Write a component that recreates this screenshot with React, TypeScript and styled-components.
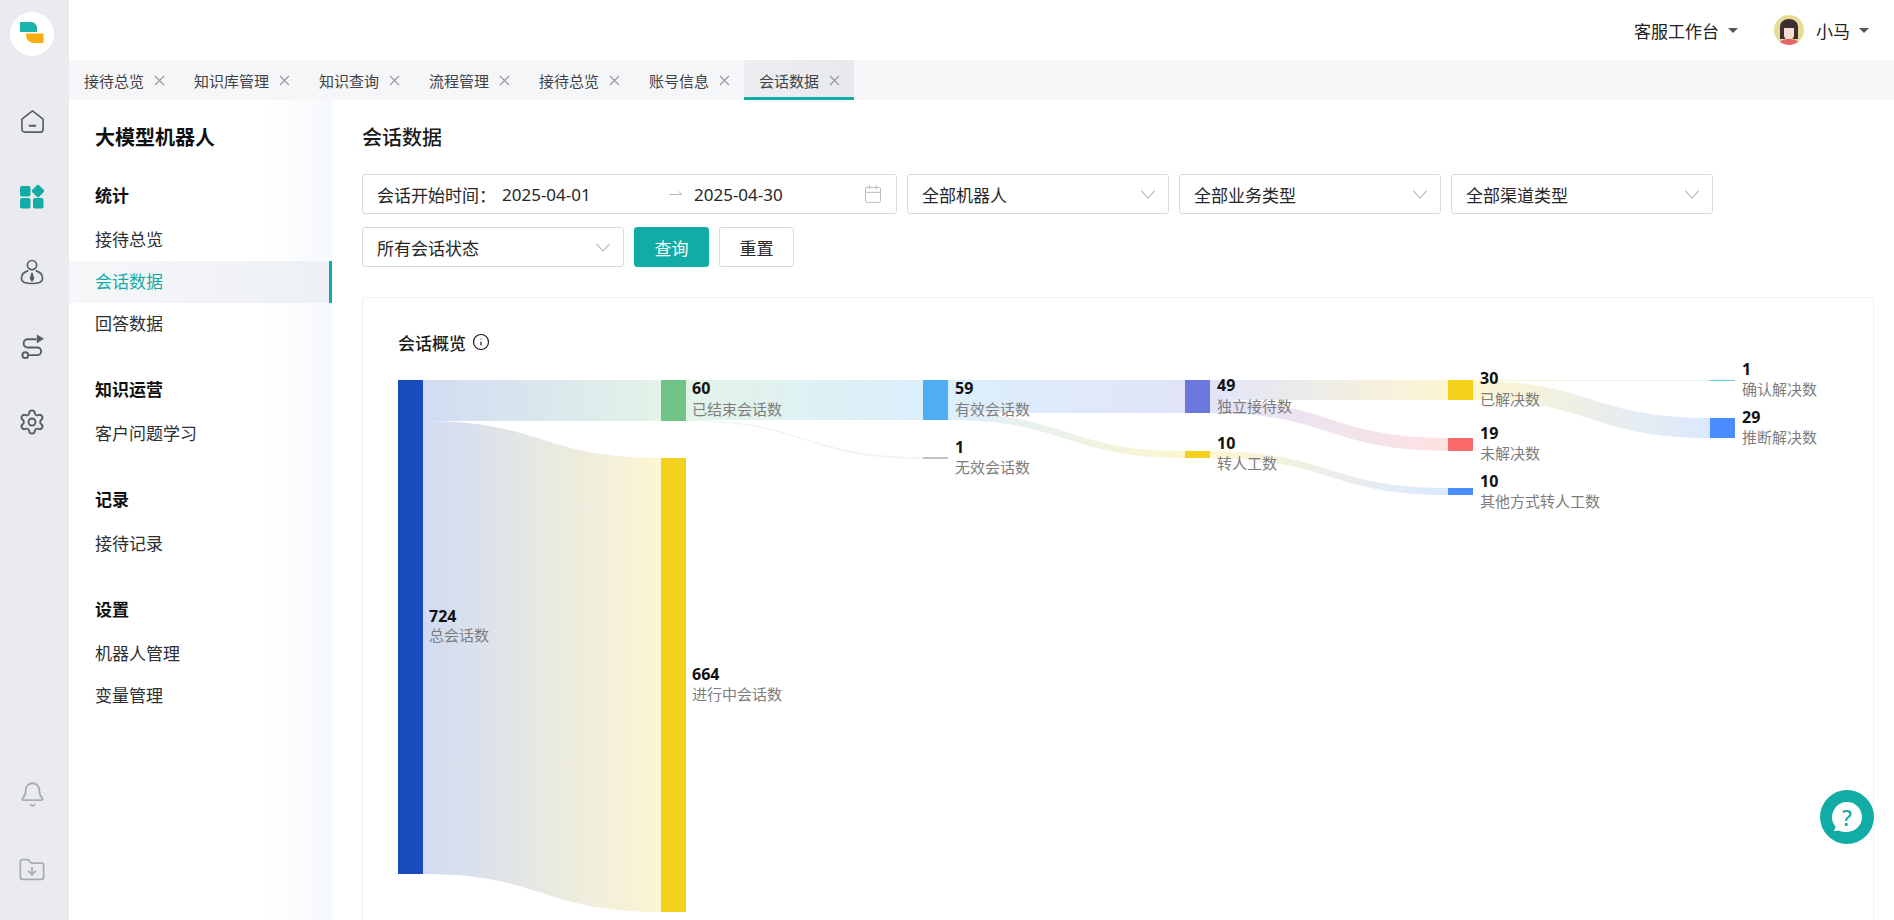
import * as React from 'react';
import styled, { createGlobalStyle } from 'styled-components';
import { Bell, Calendar, FolderDown, Info, Settings, X } from 'lucide-react';

const TEAL = '#12aca6';
const FONT = '"Noto Sans", "Noto Sans CJK SC", sans-serif';

const GlobalStyle = createGlobalStyle`
  html, body {
    margin: 0;
    height: 100%;
    overflow: hidden;
    background: #fff;
    font-family: ${FONT};
  }
  * { box-sizing: border-box; }
`;

const Page = styled.div`
  display: flex;
  width: 1894px;
  height: 920px;
  overflow: hidden;
  color: #222;
`;

const Rail = styled.nav`
  flex: 0 0 69px;
  display: flex;
  flex-direction: column;
  align-items: center;
  padding: 12px 5px 13px 0;
  background: #e9ebef;
`;

const LogoCircle = styled.div`
  display: flex;
  align-items: center;
  justify-content: center;
  width: 44px;
  height: 44px;
  margin-bottom: 28px;
  border-radius: 50%;
  background: #fff;
`;

const RailItem = styled.div<{ $pushDown?: boolean }>`
  display: flex;
  align-items: center;
  justify-content: center;
  width: 100%;
  height: 75px;
  margin-top: ${(p) => (p.$pushDown ? 'auto' : '0')};
  color: #585c63;
`;

const MutedRailItem = styled(RailItem)`
  color: #a8acb2;
`;

const Column = styled.div`
  flex: 1;
  min-width: 0;
  display: flex;
  flex-direction: column;
`;

const TopBar = styled.header`
  flex: 0 0 60px;
  display: flex;
  align-items: center;
  justify-content: flex-end;
  padding-right: 25px;
  font-size: 17px;
  background: #fff;
`;

const TopMenu = styled.div`
  display: flex;
  align-items: center;
  gap: 9px;
  margin-left: 36px;
`;

const Caret = styled.span`
  width: 0;
  height: 0;
  border-left: 5px solid transparent;
  border-right: 5px solid transparent;
  border-top: 5px solid #555;
`;

const AvatarWrap = styled.span`
  display: flex;
  margin-right: 3px;
`;

const TabBar = styled.div`
  flex: 0 0 40px;
  display: flex;
  background: #f5f6f8;
`;

const Tab = styled.div<{ $active?: boolean }>`
  display: flex;
  align-items: center;
  gap: 6.5px;
  height: 40px;
  padding: 0 11.5px 0 15px;
  font-size: 15px;
  color: #3f4348;
  background: ${(p) => (p.$active ? 'linear-gradient(90deg, #eceef1, #e7e9ed)' : 'transparent')};
  border-bottom: 3px solid ${(p) => (p.$active ? TEAL : 'transparent')};
  border-top: 3px solid transparent;
  svg { color: #94989e; }
`;

const Body = styled.div`
  flex: 1;
  min-height: 0;
  display: flex;
`;

const Sidebar = styled.aside`
  flex: 0 0 263px;
  padding-top: 24px;
  background: linear-gradient(90deg, #fff 72%, #f6f9fc 100%);
`;

const SideTitle = styled.div`
  height: 28px;
  margin-bottom: 25px;
  padding-left: 26px;
  font-size: 20px;
  font-weight: 700;
  line-height: 28px;
  color: #111;
`;

const SideSection = styled.div`
  margin-bottom: 26px;
`;

const SideHead = styled.div`
  height: 42px;
  padding-left: 26px;
  font-size: 17px;
  font-weight: 700;
  line-height: 38px;
  color: #111;
`;

const SideItem = styled.div<{ $active?: boolean }>`
  height: 42px;
  padding-left: 26px;
  font-size: 17px;
  line-height: 42px;
  color: ${(p) => (p.$active ? TEAL : '#2c2f33')};
  background: ${(p) => (p.$active ? 'linear-gradient(90deg, #f6f7f9, #edf0f4)' : 'transparent')};
  box-shadow: ${(p) => (p.$active ? `inset -3px 0 0 ${TEAL}` : 'none')};
`;

const Main = styled.main`
  flex: 1;
  min-width: 0;
  overflow: hidden;
  padding: 24px 20px 0 30px;
`;

const PageTitle = styled.h1`
  margin: 0 0 22px;
  font-size: 20px;
  font-weight: 500;
  line-height: 28px;
  color: #1b1b1b;
`;

const Filters = styled.div`
  display: flex;
  flex-wrap: wrap;
  gap: 13px 10px;
  margin-bottom: 30px;
  font-size: 17px;
`;

const Field = styled.div<{ $width: number }>`
  display: flex;
  align-items: center;
  justify-content: space-between;
  width: ${(p) => p.$width}px;
  height: 40px;
  padding: 0 13px 0 14px;
  border: 1px solid #d9d9d9;
  border-radius: 3px;
  background: #fff;
  color: #262626;
`;

const DateText = styled.span<{ $width: number }>`
  flex: 0 0 ${(p) => p.$width}px;
`;

const DateLabel = styled.span`
  flex: 0 0 125px;
`;

const DateArrow = styled.svg`
  flex: 0 0 14px;
  margin-right: 11px;
`;

const CalendarIcon = styled(Calendar)`
  margin-left: auto;
  color: #b5b5b5;
`;

const Button = styled.button<{ $primary?: boolean }>`
  width: 75px;
  height: 40px;
  padding: 0;
  border: 1px solid ${(p) => (p.$primary ? TEAL : '#d9d9d9')};
  border-radius: 3px;
  background: ${(p) => (p.$primary ? TEAL : '#fff')};
  color: ${(p) => (p.$primary ? '#fff' : '#262626')};
  font-family: ${FONT};
  font-size: 17px;
`;

const Card = styled.section`
  min-height: 640px;
  padding: 32px 0 0 35px;
  border: 1px solid #eef0f2;
  border-radius: 2px;
`;

const CardTitle = styled.div`
  display: flex;
  align-items: center;
  gap: 6px;
  height: 24px;
  margin-bottom: 6px;
  font-size: 17px;
  font-weight: 500;
  color: #1b1b1b;
`;

const Chart = styled.svg`
  display: block;
  overflow: visible;
`;

const ValueText = styled.text`
  font-family: ${FONT};
  font-size: 16px;
  font-weight: 700;
  fill: #111;
`;

const LabelText = styled.text`
  font-family: ${FONT};
  font-size: 15px;
  fill: #7d7d7d;
`;

const HelpButton = styled.div`
  position: fixed;
  right: 20px;
  bottom: 76px;
  width: 54px;
  height: 54px;
  display: flex;
  align-items: center;
  justify-content: center;
  border-radius: 50%;
  background: ${TEAL};
`;

const HelpMark = styled.text`
  font-family: ${FONT};
  font-size: 22px;
  font-weight: 500;
  fill: ${TEAL};
`;

type SankeyNode = {
  id: string;
  x: number;
  y0: number;
  y1: number;
  color: string;
  value: string;
  label: string;
  labelX: number;
  valueY: number;
  labelY: number;
};

const NODE_W = 25;

const nodes: SankeyNode[] = [
  { id: 'total', x: 398, y0: 380, y1: 874, color: '#1a4bbf', value: '724', label: '总会话数', labelX: 429, valueY: 616, labelY: 635 },
  { id: 'ended', x: 661, y0: 380, y1: 421, color: '#70c488', value: '60', label: '已结束会话数', labelX: 692, valueY: 388, labelY: 409 },
  { id: 'ongoing', x: 661, y0: 458, y1: 912, color: '#f3d11b', value: '664', label: '进行中会话数', labelX: 692, valueY: 674, labelY: 694 },
  { id: 'valid', x: 923, y0: 380, y1: 420, color: '#4eadf3', value: '59', label: '有效会话数', labelX: 955, valueY: 388, labelY: 409 },
  { id: 'invalid', x: 923, y0: 457, y1: 459, color: '#c4c4c4', value: '1', label: '无效会话数', labelX: 955, valueY: 447, labelY: 467 },
  { id: 'solo', x: 1185, y0: 380, y1: 413, color: '#6a78e0', value: '49', label: '独立接待数', labelX: 1217, valueY: 385, labelY: 406 },
  { id: 'human', x: 1185, y0: 451, y1: 458, color: '#f3d11b', value: '10', label: '转人工数', labelX: 1217, valueY: 443, labelY: 463 },
  { id: 'solved', x: 1448, y0: 380, y1: 400, color: '#f3d11b', value: '30', label: '已解决数', labelX: 1480, valueY: 378, labelY: 399 },
  { id: 'unsolved', x: 1448, y0: 438, y1: 451, color: '#fb6a6a', value: '19', label: '未解决数', labelX: 1480, valueY: 433, labelY: 453 },
  { id: 'other', x: 1448, y0: 488, y1: 495, color: '#4a8bff', value: '10', label: '其他方式转人工数', labelX: 1480, valueY: 481, labelY: 501 },
  { id: 'confirm', x: 1710, y0: 380, y1: 381, color: '#5ccfc9', value: '1', label: '确认解决数', labelX: 1742, valueY: 369, labelY: 389 },
  { id: 'infer', x: 1710, y0: 418, y1: 438, color: '#4a8bff', value: '29', label: '推断解决数', labelX: 1742, valueY: 417, labelY: 437 },
];

// from, to, top and bottom of the band at the source end
const links: [string, string, number, number][] = [
  ['total', 'ended', 380, 421],
  ['total', 'ongoing', 421, 874],
  ['ended', 'valid', 380, 420],
  ['ended', 'invalid', 420, 421],
  ['valid', 'solo', 380, 413],
  ['valid', 'human', 413, 420],
  ['solo', 'solved', 380, 400],
  ['solo', 'unsolved', 400, 413],
  ['human', 'other', 451, 458],
  ['solved', 'confirm', 380, 381],
  ['solved', 'infer', 381, 400],
];

const byId = (id: string) => nodes.find((n) => n.id === id) as SankeyNode;

const linkPath = (x0: number, x1: number, s0: number, s1: number, t0: number, t1: number) => {
  const m = (x0 + x1) / 2;
  return `M${x0} ${s0}C${m} ${s0} ${m} ${t0} ${x1} ${t0}L${x1} ${t1}C${m} ${t1} ${m} ${s1} ${x0} ${s1}Z`;
};

const Sankey = () => (
  <Chart width={1470} height={560} viewBox="398 360 1470 560">
    <defs>
      {links.map(([from, to]) => (
        <linearGradient
          key={from + to}
          id={`grad-${from}-${to}`}
          gradientUnits="userSpaceOnUse"
          x1={byId(from).x + NODE_W}
          x2={byId(to).x}
          y1="0"
          y2="0"
        >
          <stop offset="0" stopColor={byId(from).color} stopOpacity="0.2" />
          <stop offset="1" stopColor={byId(to).color} stopOpacity="0.2" />
        </linearGradient>
      ))}
    </defs>
    {links.map(([from, to, s0, s1]) => (
      <path
        key={from + to}
        d={linkPath(byId(from).x + NODE_W, byId(to).x, s0, s1, byId(to).y0, byId(to).y1)}
        fill={`url(#grad-${from}-${to})`}
      />
    ))}
    {nodes.map((n) => (
      <g key={n.id}>
        <rect x={n.x} y={n.y0} width={NODE_W} height={n.y1 - n.y0} fill={n.color} />
        <ValueText x={n.labelX} y={n.valueY} dominantBaseline="central">
          {n.value}
        </ValueText>
        <LabelText x={n.labelX} y={n.labelY} dominantBaseline="central">
          {n.label}
        </LabelText>
      </g>
    ))}
  </Chart>
);

const Logo = () => (
  <svg width="24" height="24" viewBox="0 0 24 24">
    <path d="M0 0h11a6 6 0 0 1 6 6v4H0z" fill="#1db3ad" />
    <path d="M6 11.5h17.5V21H14a8 8 0 0 1-8-8z" fill="#f9ae10" />
  </svg>
);

const HomeIcon = () => (
  <svg width="25" height="25" viewBox="0 0 26 26" fill="none" stroke="currentColor" strokeWidth="1.7" strokeLinejoin="round">
    <path d="M2 10.5 13 2l11 8.5V21a3 3 0 0 1-3 3H5a3 3 0 0 1-3-3z" />
    <path d="M10 17.5h6" strokeLinecap="round" strokeWidth="2" />
  </svg>
);

const AppsIcon = () => (
  <svg width="26" height="26" viewBox="0 0 26 26" fill={TEAL}>
    <rect x="1" y="2" width="10.5" height="10.5" rx="2" />
    <rect x="1" y="14" width="10.5" height="10.5" rx="2" />
    <rect x="14" y="14" width="10.5" height="10.5" rx="2" />
    <rect x="14.2" y="2.2" width="9.6" height="9.6" rx="1.6" transform="rotate(45 19 7)" />
  </svg>
);

const AgentIcon = () => (
  <svg width="24" height="28" viewBox="0 0 26 28" fill="none" stroke="currentColor" strokeWidth="1.8" strokeLinejoin="round">
    <circle cx="13" cy="6.5" r="5" />
    <path d="M9 12.5C4 14 1.5 17.5 1.5 21c0 3.5 5 5.5 11.5 5.5S24.500 24.500 24.500 21c0-3.500-2.500-7-7.500-8.500" />
    <path d="M13 15.500 11.500 21 13 23.500 14.500 21z" fill="currentColor" />
  </svg>
);

const FlowIcon = () => (
  <svg width="25" height="27" viewBox="0 0 26 28" fill="none" stroke="currentColor" strokeWidth="2">
    <path d="M17 6.500H8a4 4 0 0 0 0 8.500h10a4 4 0 0 1 0 8H9.500" />
    <circle cx="5.500" cy="23" r="3" />
    <path d="M17.500 1.500 25 6 17.500 10.500z" fill="currentColor" stroke="none" />
  </svg>
);

const Avatar = () => (
  <svg width="30" height="30" viewBox="0 0 30 30">
    <clipPath id="avatar-clip">
      <circle cx="15" cy="15" r="15" />
    </clipPath>
    <g clipPath="url(#avatar-clip)">
      <rect width="30" height="30" fill="#e6dc98" />
      <path d="M6 24V12c0-5 4-8 9-8s9 3 9 8v12z" fill="#3d2f30" />
      <path d="M10 13h10v7c0 3-2 5-5 5s-5-2-5-5z" fill="#f6dcd3" />
      <path d="M5 30c0-4 4-6 10-6s10 2 10 6z" fill="#e4676c" />
    </g>
  </svg>
);

const Chevron = () => (
  <svg width="14" height="9" viewBox="0 0 14 9" fill="none" stroke="#b4b4b4" strokeWidth="1.1">
    <path d="M.5.800 7 8 13.500.800" />
  </svg>
);

const HelpIcon = () => (
  <svg width="34" height="34" viewBox="0 0 34 34">
    <path
      d="M17 2a15 15 0 0 1 0 30c-3 0-6-.3-8.500-1.500-1.500.5-3.500.5-5 .5 1-1 1.800-2.500 2-4.500A15 15 0 0 1 17 2z"
      fill="#fff"
    />
    <HelpMark x="17" y="17" textAnchor="middle" dominantBaseline="central">?</HelpMark>
  </svg>
);

const tabs = ['接待总览', '知识库管理', '知识查询', '流程管理', '接待总览', '账号信息', '会话数据'];

const menu = [
  { head: '统计', items: ['接待总览', '会话数据', '回答数据'] },
  { head: '知识运营', items: ['客户问题学习'] },
  { head: '记录', items: ['接待记录'] },
  { head: '设置', items: ['机器人管理', '变量管理'] },
];

const selects = ['全部机器人', '全部业务类型', '全部渠道类型', '所有会话状态'];

const App = () => {
  return (
    <Page>
      <GlobalStyle />
      <Rail>
        <LogoCircle>
          <Logo />
        </LogoCircle>
        <RailItem><HomeIcon /></RailItem>
        <RailItem><AppsIcon /></RailItem>
        <RailItem><AgentIcon /></RailItem>
        <RailItem><FlowIcon /></RailItem>
        <RailItem><Settings size={28} strokeWidth={1.6} /></RailItem>
        <MutedRailItem $pushDown><Bell size={27} strokeWidth={1.6} /></MutedRailItem>
        <MutedRailItem><FolderDown size={28} strokeWidth={1.5} /></MutedRailItem>
      </Rail>
      <Column>
        <TopBar>
          <TopMenu>
            客服工作台
            <Caret />
          </TopMenu>
          <TopMenu>
            <AvatarWrap><Avatar /></AvatarWrap>
            小马
            <Caret />
          </TopMenu>
        </TopBar>
        <TabBar>
          {tabs.map((t, i) => (
            <Tab key={i} $active={i === tabs.length - 1}>
              {t}
              <X size={17} strokeWidth={1.5} />
            </Tab>
          ))}
        </TabBar>
        <Body>
          <Sidebar>
            <SideTitle>大模型机器人</SideTitle>
            {menu.map((section) => (
              <SideSection key={section.head}>
                <SideHead>{section.head}</SideHead>
                {section.items.map((item) => (
                  <SideItem key={item} $active={item === '会话数据'}>
                    {item}
                  </SideItem>
                ))}
              </SideSection>
            ))}
          </Sidebar>
          <Main>
            <PageTitle>会话数据</PageTitle>
            <Filters>
              <Field $width={535}>
                <DateLabel>会话开始时间：</DateLabel>
                <DateText $width={167}>2025-04-01</DateText>
                <DateArrow width="14" height="8" viewBox="0 0 14 8" fill="none" stroke="#bdbdbd" strokeWidth="1">
                  <path d="M0 4.500h13M9.500 1.500 13 4.500" />
                </DateArrow>
                <DateText $width={100}>2025-04-30</DateText>
                <CalendarIcon size={20} strokeWidth={1.1} />
              </Field>
              {selects.map((s) => (
                <Field key={s} $width={262}>
                  {s}
                  <Chevron />
                </Field>
              ))}
              <Button $primary>查询</Button>
              <Button>重置</Button>
            </Filters>
            <Card>
              <CardTitle>
                会话概览
                <Info size={18} strokeWidth={1.6} />
              </CardTitle>
              <Sankey />
            </Card>
          </Main>
        </Body>
      </Column>
      <HelpButton>
        <HelpIcon />
      </HelpButton>
    </Page>
  );
};

export default App;
